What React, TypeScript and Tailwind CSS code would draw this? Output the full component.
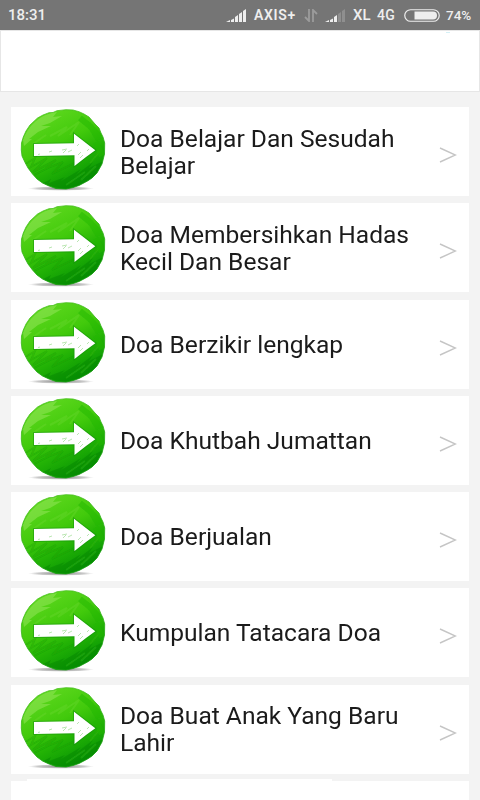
const items = [
  ["Doa Belajar Dan Sesudah", "Belajar"],
  ["Doa Membersihkan Hadas", "Kecil Dan Besar"],
  ["Doa Berzikir lengkap"],
  ["Doa Khutbah Jumattan"],
  ["Doa Berjualan"],
  ["Kumpulan Tatacara Doa"],
  ["Doa Buat Anak Yang Baru", "Lahir"],
];

const ballPath =
  "M46 1.700 53 2 59 3.700 64 6 69 9 75 16 79 20 81 25 83 29 84.700 35 84.500 46 82 56 77 65 72 70 67.500 73 59 77.500 53 79.500 46 81 36 80.500 29 78 22.500 75 17 71 12.500 66 8 60 5.300 55 2 48 1.300 42 1.500 35 3.300 29 6 23 10 17 17.500 10 23 7 29 4.700 33 4.500 37 2.700Z";

function Defs() {
  return (
    <svg className="absolute h-0 w-0" aria-hidden="true">
      <defs>
        <linearGradient id="ball" x1="0.25" y1="0.05" x2="0.72" y2="0.95">
          <stop offset="0" stopColor="#5ed81e" />
          <stop offset="0.4" stopColor="#42ca0c" />
          <stop offset="0.65" stopColor="#22b205" />
          <stop offset="1" stopColor="#039003" />
        </linearGradient>
        <linearGradient id="edge" x1="0.3" y1="0" x2="0.7" y2="1">
          <stop offset="0" stopColor="#4cc41e" />
          <stop offset="1" stopColor="#129a0c" />
        </linearGradient>
        <radialGradient id="shade">
          <stop offset="0" stopColor="#666" stopOpacity="0.8" />
          <stop offset="0.7" stopColor="#888" stopOpacity="0.45" />
          <stop offset="1" stopColor="#aaa" stopOpacity="0" />
        </radialGradient>
        <filter id="soft">
          <feGaussianBlur stdDeviation="0.7" />
        </filter>
        <clipPath id="ballClip">
          <path d={ballPath} />
        </clipPath>
      </defs>
    </svg>
  );
}

function ArrowBall() {
  return (
    <svg className="h-[84px] w-[88px] shrink-0" viewBox="0 0 88 84" fill="none">
      <ellipse cx="41" cy="80.500" rx="33" ry="2.300" fill="url(#shade)" />
      <g clipPath="url(#ballClip)">
        <rect width="88" height="84" fill="url(#ball)" />
        <g filter="url(#soft)">
          <path d="M3 32C8 18 20 6 37 4L33 9 42 8 30 15 21 18 31 18 18 24 9 31 12 31 4 38Z" fill="#97e75d" opacity="0.5" />
          <path d="M30 28 47 19 38 28 59 14 50 27M13 36 26 27" stroke="#74da34" strokeWidth="2" opacity="0.3" />
          <path d="M4 57 15 50 11 59 27 50 13 64 36 52 25 61 43 54 32 66 61 52M14 67 30 59" stroke="#159c06" strokeWidth="2" opacity="0.3" />
          <path d="M83 53C79 69 63 80 43 81L21 76 31 71 29 75 45 69 41 73 61 61 56 67 73 54 69 60Z" fill="#027d04" opacity="0.38" />
          <path d="M46 77 65 64M61 72 76 58M70 55 80 43" stroke="#35b712" strokeWidth="2" opacity="0.4" />
          <path d="M60 10 71 19 79 32M68 16 80 29M76 34 82 48" stroke="#1fb803" strokeWidth="6" opacity="0.5" />
        </g>
      </g>
      <path d={ballPath} stroke="url(#edge)" strokeWidth="0.800" />
      <path d="M14 36 54 35.300V25.800L64 33.500 75.300 42.300 66 49 54.500 58V47.300L14 48Z" stroke="#118f0c" strokeWidth="2" opacity="0.5" />
      <path d="M14 36 54 35.300V25.800L64 33.500 75.300 42.300 66 49 54.500 58V47.300L14 48Z" fill="#fff" />
      <path d="M18 46.500 20 46M29 44 32 43M43 45 46 42M48 44 52 42M42 42 47 41M57 38 59 36M58 47 61 44M60 50 63 47M67 43 69 41" stroke="#a9e09f" strokeWidth="0.800" />
    </svg>
  );
}

function Signal({ weak = false }: { weak?: boolean }) {
  return (
    <svg className="h-[13px] w-[21px]" viewBox="0 0 21 13" fill="#eee">
      <path d="M0 13 4 11V13ZM5 11 8 9.500V13H5ZM9 8 12 6V13H9Z" />
      <path d="M13 5 16 3V13H13ZM17 2 20 0V13H17Z" opacity={weak ? 0.22 : 1} />
    </svg>
  );
}

function StatusBar() {
  return (
    <header className="flex h-[30px] items-center bg-[#757575] pl-2 text-[15px] leading-[30px] font-medium text-[#eee]">
      <span className="w-[218px]">18:31</span>
      <Signal />
      <span className="ml-[7px] w-[50px] text-[14px] font-semibold tracking-[0.7px] whitespace-nowrap">AXIS+</span>
      <svg className="h-[13px] w-[14px]" viewBox="0 0 14 13" fill="none" stroke="#9c9c9c" strokeWidth="1.800">
        <path d="M5 0V12L1 8M9 13V1L13 5" />
      </svg>
      <span className="ml-[7px] flex">
        <Signal weak />
      </span>
      <span className="ml-[7px] w-6 text-[15px]">XL</span>
      <span className="w-[27px] text-[14px] tracking-[0.2px]">4G</span>
      <svg className="h-[13px] w-9" viewBox="0 0 36 13" fill="none">
        <rect x="0.750" y="0.750" width="34.500" height="11.500" rx="5.750" stroke="#eee" strokeWidth="1.200" />
        <path d="M10.500 2.500H29A4 4 0 0 1 29 10.500H10.500Z" fill="#eee" />
      </svg>
      <span className="ml-[6px] text-[13.500px]">74%</span>
    </header>
  );
}

function Row({ lines }: { lines: string[] }) {
  return (
    <li className="flex h-[89px] items-start bg-white pt-px pl-[9px]">
      <ArrowBall />
      <div className="flex h-[89px] w-[300px] items-center pl-3">
        <div className="origin-left scale-x-[1.023] text-[24px] leading-[27px] whitespace-nowrap text-[#1b1b1b]">
          {lines.map((line) => (
            <div key={line}>{line}</div>
          ))}
        </div>
      </div>
      <svg className="mt-[39px] ml-[31px] h-[17px] w-[18px] shrink-0" viewBox="0 0 18 17" fill="none" stroke="#c5c5c5" strokeWidth="1.400">
        <path d="M1 1 16.500 8 1 15" />
      </svg>
    </li>
  );
}

export default function App() {
  return (
    <div className="h-[800px] w-[480px] overflow-hidden bg-[#f3f3f3] font-['Roboto',sans-serif]">
      <Defs />
      <StatusBar />
      <div className="relative h-[62px] border border-[#e6e6e6] bg-white">
        <span className="absolute top-[1px] right-[29px] h-px w-1 bg-[#d5f0f6]" />
      </div>
      <ul className="mt-[15px] flex flex-col gap-[7.250px] px-[11px]">
        {items.map((lines) => (
          <Row key={lines[0]} lines={lines} />
        ))}
        <li className="relative h-[40px] bg-white">
          <span className="absolute -top-[2px] left-4 h-[3px] w-[305px] bg-white" />
        </li>
      </ul>
    </div>
  );
}
